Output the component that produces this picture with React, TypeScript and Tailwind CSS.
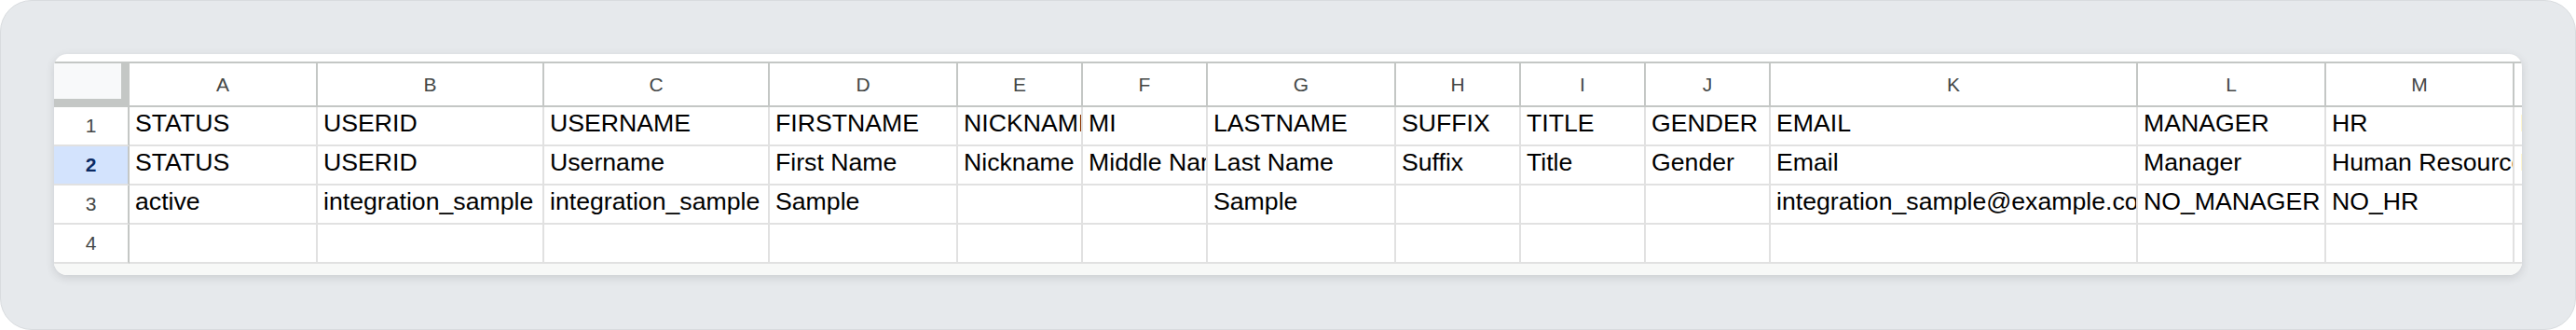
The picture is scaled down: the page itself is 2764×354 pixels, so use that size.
import React from 'react';

const COLUMNS = ['A', 'B', 'C', 'D', 'E', 'F', 'G', 'H', 'I', 'J', 'K', 'L', 'M', 'N'];

const ROWS: string[][] = [
  ['STATUS', 'USERID', 'USERNAME', 'FIRSTNAME', 'NICKNAME', 'MI', 'LASTNAME', 'SUFFIX', 'TITLE', 'GENDER', 'EMAIL', 'MANAGER', 'HR', 'DEPARTMENT'],
  ['STATUS', 'USERID', 'Username', 'First Name', 'Nickname', 'Middle Name', 'Last Name', 'Suffix', 'Title', 'Gender', 'Email', 'Manager', 'Human Resources', 'Department'],
  ['active', 'integration_sample', 'integration_sample', 'Sample', '', '', 'Sample', '', '', '', 'integration_sample@example.com', 'NO_MANAGER', 'NO_HR', ''],
  ['', '', '', '', '', '', '', '', '', '', '', '', '', ''],
];

const SELECTED_ROW = 2;

export default function App() {
  return (
    <div className="w-full h-[354px] bg-white font-['Liberation_Sans',Arial,sans-serif]">
      <div className="h-full rounded-[34px] border border-[#d9dcdf] bg-[#e6e9ec] p-[57px]">
        {/* sheet card */}
        <div className="overflow-hidden rounded-[14px] bg-white pt-[8px] shadow-[0_3px_10px_rgba(60,64,67,0.16)]">
          <div className="grid grid-cols-[81px_202px_243px_242px_202px_134px_134px_202px_134px_134px_134px_394px_202px_202px_202px] border-t-2 border-[#c4c7c5]">
            {/* corner + column letters */}
            <div className="h-[47px] bg-[#f8f9fa] border-r-[9px] border-b-[9px] border-[#c4c7c5]" />
            {COLUMNS.map(col => (
              <div
                key={col}
                className="h-[47px] flex items-center justify-center border-r-2 border-b-2 border-[#c4c7c5] text-[21px] leading-normal text-[#444746]"
              >
                {col}
              </div>
            ))}

            {ROWS.map((row, i) => {
              const n = i + 1;
              const selected = n === SELECTED_ROW;
              return (
                <React.Fragment key={n}>
                  <div
                    className={
                      selected
                        ? 'h-[42px] flex items-center justify-center border-r-2 border-r-[#c4c7c5] border-b-2 border-b-[#e1e1e1] bg-[#d3e3fd] text-[21px] leading-normal font-bold text-[#0b2a63]'
                        : 'h-[42px] flex items-center justify-center border-r-2 border-r-[#c4c7c5] border-b-2 border-b-[#e1e1e1] text-[21px] leading-normal text-[#444746]'
                    }
                  >
                    {n}
                  </div>
                  {row.map((value, j) => (
                    <div
                      key={j}
                      className="h-[42px] flex items-end overflow-hidden whitespace-nowrap border-r-2 border-b-2 border-[#e1e1e1] pl-[6px] pb-[3px] text-[26.67px] leading-normal text-black"
                    >
                      <span>{value}</span>
                    </div>
                  ))}
                </React.Fragment>
              );
            })}
          </div>
          {/* scrollbar gutter */}
          <div className="h-[12px] bg-[#f7f8f7]" />
        </div>
      </div>
    </div>
  );
}
